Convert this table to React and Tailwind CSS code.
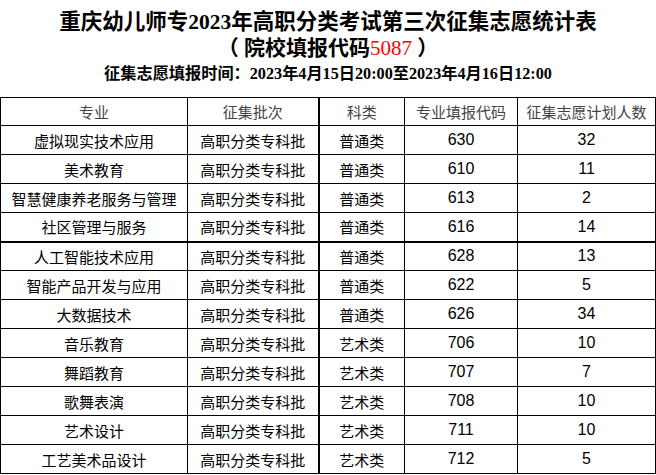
const rows = [
  ['虚拟现实技术应用', '高职分类专科批', '普通类', '630', '32'],
  ['美术教育', '高职分类专科批', '普通类', '610', '11'],
  ['智慧健康养老服务与管理', '高职分类专科批', '普通类', '613', '2'],
  ['社区管理与服务', '高职分类专科批', '普通类', '616', '14'],
  ['人工智能技术应用', '高职分类专科批', '普通类', '628', '13'],
  ['智能产品开发与应用', '高职分类专科批', '普通类', '622', '5'],
  ['大数据技术', '高职分类专科批', '普通类', '626', '34'],
  ['音乐教育', '高职分类专科批', '艺术类', '706', '10'],
  ['舞蹈教育', '高职分类专科批', '艺术类', '707', '7'],
  ['歌舞表演', '高职分类专科批', '艺术类', '708', '10'],
  ['艺术设计', '高职分类专科批', '艺术类', '711', '10'],
  ['工艺美术品设计', '高职分类专科批', '艺术类', '712', '5'],
];

const headers = ['专业', '征集批次', '科类', '专业填报代码', '征集志愿计划人数'];

const serif = "font-['Liberation_Serif','Noto_Sans_CJK_SC',serif]";
const sans = "font-['Noto_Sans_CJK_SC',sans-serif]";
const num = "font-['Liberation_Sans','Noto_Sans_CJK_SC',sans-serif]";

export default function App() {
  return (
    <div className="w-[656px] h-[475px] bg-white overflow-hidden">
      <div className={`pt-[9px] pb-[10px] text-center text-black ${serif}`}>
        <div className="text-[21.5px] leading-[26px] font-bold whitespace-nowrap">重庆幼儿师专2023年高职分类考试第三次征集志愿统计表</div>
        <div className="text-[21px] leading-[26px] font-bold whitespace-nowrap">（ 院校填报代码<span className="text-[#ff0000] font-normal">5087</span> ）</div>
        <div className="text-[16.2px] leading-[26px] font-bold whitespace-nowrap">征集志愿填报时间：2023年4月15日20:00至2023年4月16日12:00</div>
      </div>
      <table className={`w-[655px] table-fixed border-collapse ${sans} text-[15px]`}>
        <colgroup>
          <col className="w-[187px]" />
          <col className="w-[131px]" />
          <col className="w-[86px]" />
          <col className="w-[113px]" />
          <col className="w-[138px]" />
        </colgroup>
        <thead>
          <tr className="h-[28px]">
            {headers.map((h, i) => (
              <th
                key={h}
                className={`border border-black p-0 font-normal text-center text-[#444] whitespace-nowrap leading-none ${i === 2 ? 'border-l-2' : ''}`}
              >
                {h}
              </th>
            ))}
          </tr>
        </thead>
        <tbody>
          {rows.map((r, ri) => (
            <tr key={ri} className="h-[29px]">
              {r.map((c, ci) => (
                <td
                  key={ci}
                  className={`border border-black p-0 text-center text-black whitespace-nowrap leading-none ${ci >= 3 ? num + ' text-[16px]' : ''} ${ci === 2 ? 'border-l-2' : ''} ${ri === 3 ? 'border-b-2' : ''}`}
                >
                  {c}
                </td>
              ))}
            </tr>
          ))}
        </tbody>
      </table>
    </div>
  );
}
